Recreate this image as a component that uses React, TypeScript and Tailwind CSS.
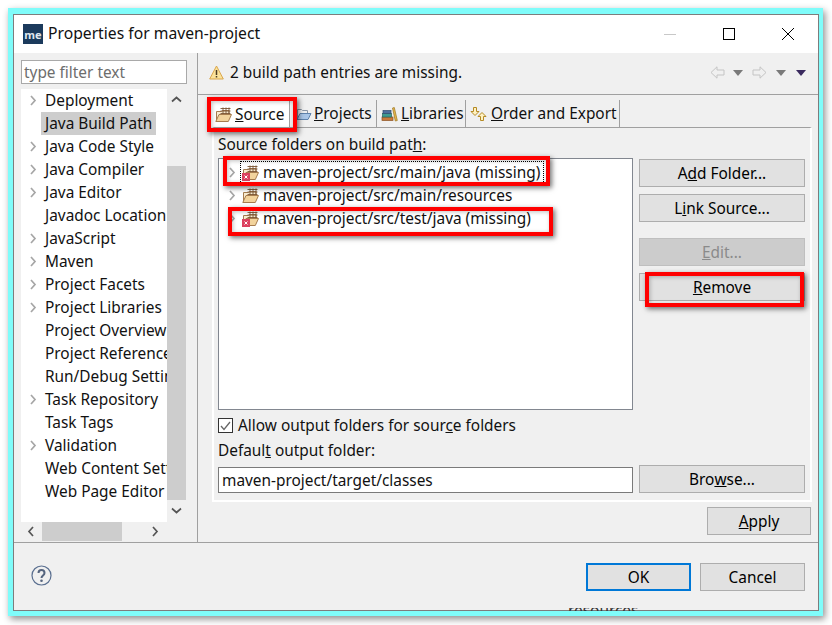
import type { ReactNode } from 'react';

const treeItems: { label: string; arrow?: boolean; selected?: boolean }[] = [
  { label: 'Deployment', arrow: true },
  { label: 'Java Build Path', selected: true },
  { label: 'Java Code Style', arrow: true },
  { label: 'Java Compiler', arrow: true },
  { label: 'Java Editor', arrow: true },
  { label: 'Javadoc Location' },
  { label: 'JavaScript', arrow: true },
  { label: 'Maven', arrow: true },
  { label: 'Project Facets', arrow: true },
  { label: 'Project Libraries', arrow: true },
  { label: 'Project Overview' },
  { label: 'Project References' },
  { label: 'Run/Debug Settings' },
  { label: 'Task Repository', arrow: true },
  { label: 'Task Tags' },
  { label: 'Validation', arrow: true },
  { label: 'Web Content Settings' },
  { label: 'Web Page Editor' },
];

function Chevron({ dir = 'right', color = '#a6a6a6' }: { dir?: 'right' | 'left' | 'up' | 'down'; color?: string }) {
  const d = { right: 'M3 1l4 4.5L3 10', left: 'M7 1L3 5.5 7 10', up: 'M1 7.5l4.5-4 4.5 4', down: 'M1 3.5l4.5 4 4.5-4' }[dir];
  return (
    <svg width="11" height="11" viewBox="0 0 11 11" fill="none" stroke={color} strokeWidth="1.7">
      <path d={d} />
    </svg>
  );
}

function SourceFolder({ error }: { error?: boolean }) {
  return (
    <svg width="17" height="16" viewBox="0 0 17 16" className="shrink-0">
      <path d="M1.500 13.500V4.500h5l1-1h6.500V8" fill="#f8ebd0" stroke="#a67c4e" />
      <path d="M.8 14.500L4 7.500h12.500l-3.200 7z" fill="#f2d39c" stroke="#a67c4e" />
      <path d="M5.500 1.500h10M5.500 4h10M5.500 6.500h10M8 .5v6.500M11 .5v6.500M14 .5v6.500" stroke="#7a5533" fill="none" strokeWidth=".9" />
      {error && (
        <g>
          <rect x="0" y="8" width="8" height="8" fill="#dc4160" />
          <path d="M2.500 10.500l3 3M5.500 10.500l-3 3" stroke="#fff" />
        </g>
      )}
    </svg>
  );
}

function ProjectFolder() {
  return (
    <svg width="16" height="16" viewBox="0 0 16 16" className="shrink-0">
      <path d="M1.500 13V3.500h4l1 1h5V8" fill="#eef0f2" stroke="#8a97a8" />
      <path d="M1 13.500L4 7.500h11l-3 6z" fill="#a9c6e8" stroke="#5f83ad" />
    </svg>
  );
}

function BooksIcon() {
  return (
    <svg width="17" height="16" viewBox="0 0 17 16" className="shrink-0">
      <rect x="1" y="11" width="11" height="3.500" fill="#c9793a" stroke="#8a5020" strokeWidth=".7" />
      <rect x="1.500" y="7.500" width="9" height="3.500" fill="#3f9a8f" stroke="#25665e" strokeWidth=".7" />
      <rect x="2" y="4.500" width="8" height="3" fill="#4e6f9e" stroke="#2f4a70" strokeWidth=".7" />
      <path d="M11.500 2l1.800-.5 3 13-2 .5z" fill="#e6b64c" stroke="#9a7420" strokeWidth=".7" />
    </svg>
  );
}

function OrderIcon() {
  return (
    <svg width="17" height="16" viewBox="0 0 17 16" fill="#fff2c2" stroke="#b58a25" className="shrink-0">
      <path d="M3.500 1.500h3v4h2.500l-4 4-4-4h2.500z" />
      <path d="M10.500 14.500h3v-4H16l-4-4-4 4h2.500z" />
    </svg>
  );
}

function Btn({ children, className = '' }: { children: ReactNode; className?: string }) {
  return (
    <div className={`flex h-[28px] items-center justify-center border border-[#adadad] bg-[#e1e1e1] pt-[2px] text-[#000] ${className}`}>
      {children}
    </div>
  );
}

function RedBox({ className }: { className: string }) {
  return <div className={`pointer-events-none absolute border-4 border-[#ff0000] shadow-[2px_2px_5px_rgba(0,0,0,0.55),inset_1px_1px_4px_rgba(0,0,0,0.25)] ${className}`} />;
}

function NavArrow({ flip }: { flip?: boolean }) {
  return (
    <svg width="15" height="13" viewBox="0 0 15 13" fill="none" stroke="#c4c4c4" className={flip ? '-scale-x-100' : ''}>
      <path d="M7 .8L1 6.500l6 5.700V9h7V4H7z" />
    </svg>
  );
}

function Tri({ color = '#7a7a7a' }: { color?: string }) {
  return (
    <svg width="10" height="6" viewBox="0 0 10 6" className="block">
      <path d="M0 0h10L5 6z" fill={color} />
    </svg>
  );
}

export default function App() {
  return (
    <div className="relative h-[625px] w-[832px] overflow-hidden bg-white pl-[8px] pt-[8px] font-['Noto_Sans','Liberation_Sans',sans-serif] text-[15.4px] leading-none text-[#111]">
      <div className="h-[608px] w-[815px] bg-[#7ffcfa] pb-[5px] pl-[5px] pr-[4px] pt-[6px] shadow-[2px_3px_7px_rgba(0,0,0,0.45)]">
        <div className="flex h-full w-full flex-col border border-[#7d7d7d] bg-[#f0f0f0]">
          {/* title bar */}
          <div className="flex h-[38px] shrink-0 items-center bg-white pl-[9px]">
            <div className="flex h-[20px] w-[20px] items-center justify-center bg-[#1b3a5c] text-[11px] font-bold text-[#dfe6ee]">me</div>
            <span className="ml-[5px] text-[15.7px]">Properties for maven-project</span>
            <div className="ml-auto flex h-full pr-[1px]">
              <div className="flex w-[59px] items-center justify-center">
                <div className="h-px w-[12px] bg-[#c8c8c8]" />
              </div>
              <div className="flex w-[59px] items-center justify-center">
                <div className="h-[12px] w-[12px] border border-black" />
              </div>
              <div className="flex w-[59px] items-center justify-center">
                <svg width="12" height="12" viewBox="0 0 12 12" stroke="#000" fill="none">
                  <path d="M0 0l12 12M12 0L0 12" />
                </svg>
              </div>
            </div>
          </div>

          {/* main */}
          <div className="flex h-[490px] shrink-0 border-b border-[#a0a0a0]">
            {/* left panel */}
            <div className="w-[184px] shrink-0 border-r border-[#a0a0a0] pl-[7px] pt-[7px]">
              <div className="flex h-[24px] w-[166px] items-center border border-[#a9a9a9] bg-white pl-[2px] pt-[1px] text-[#6d6d6d]">type filter text</div>
              <div className="mt-[5px] flex h-[433px] w-[166px]">
                <div className="w-[146px] overflow-hidden bg-white">
                  {treeItems.map(item => (
                    <div key={item.label} className="relative flex h-[23px] items-center whitespace-nowrap">
                      {item.arrow && (
                        <span className="ml-[7px] flex w-[17px]">
                          <Chevron />
                        </span>
                      )}
                      {item.selected ? (
                        <span className="ml-[20px] flex h-[23px] items-center bg-[#cdcdcd] pl-[4px] pr-[4px]">{item.label}</span>
                      ) : (
                        <span className={item.arrow ? '' : 'ml-[24px]'}>{item.label}</span>
                      )}
                    </div>
                  ))}
                </div>
                <div className="flex w-[19px] flex-col bg-[#f0f0f0]">
                  <div className="flex h-[20px] items-center justify-center">
                    <Chevron dir="up" color="#555" />
                  </div>
                  <div className="mt-[57px] h-[334px] bg-[#cdcdcd]" />
                  <div className="flex h-[20px] items-center justify-center">
                    <Chevron dir="down" color="#555" />
                  </div>
                </div>
              </div>
              <div className="flex h-[19px] w-[146px] items-center">
                <div className="flex w-[21px] justify-center">
                  <Chevron dir="left" color="#555" />
                </div>
                <div className="h-full w-[80px] bg-[#cdcdcd]" />
                <div className="flex flex-1 justify-end pr-[6px]">
                  <Chevron dir="right" color="#555" />
                </div>
              </div>
            </div>

            {/* right panel */}
            <div className="flex min-w-0 flex-1 flex-col">
              <div className="flex h-[42px] shrink-0 items-center border-b border-[#a0a0a0] pb-[2px] pl-[11px] pr-[12px]">
                <svg width="15" height="15" viewBox="0 0 15 15">
                  <path d="M7.500 1L14.300 14H.7z" fill="#fbe29a" stroke="#d9a64c" strokeLinejoin="round" />
                  <path d="M7.500 5v5M7.500 11v1.600" stroke="#4a3a20" strokeWidth="1.500" />
                </svg>
                <span className="ml-[6px]">2 build path entries are missing.</span>
                <div className="ml-auto flex items-center">
                  <NavArrow />
                  <span className="ml-[8px]"><Tri /></span>
                  <span className="ml-[9px]"><NavArrow flip /></span>
                  <span className="ml-[9px]"><Tri /></span>
                  <span className="ml-[10px]"><Tri color="#3a2a5e" /></span>
                </div>
              </div>

              {/* tabs */}
              <div className="ml-[11px] mt-[5px] flex h-[27px] shrink-0 pt-[0px]">
                <div className="flex w-[81px] items-center border-l border-r border-t border-[#a0a0a0] bg-white pl-[5px] pt-[1px]">
                  <SourceFolder />
                  <span className="ml-[3px]"><u>S</u>ource</span>
                </div>
                <div className="flex w-[87px] items-center border-r border-[#a0a0a0] pl-[6px] pt-[1px]">
                  <ProjectFolder />
                  <span className="ml-[2px]"><u>P</u>rojects</span>
                </div>
                <div className="flex w-[89px] items-center border-r border-[#a0a0a0] pl-[4px] pt-[1px]">
                  <BooksIcon />
                  <span className="ml-[3px]"><u>L</u>ibraries</span>
                </div>
                <div className="flex w-[154px] items-center border-r border-[#a0a0a0] pl-[4px] pt-[1px]">
                  <OrderIcon />
                  <span className="ml-[4px]"><u>O</u>rder and Export</span>
                </div>
              </div>

              {/* tab body */}
              <div className="ml-[14px] flex h-[375px] w-[600px] shrink-0 border-b-2 border-l-2 border-r-2 border-t border-b-white border-l-white border-r-white border-t-[#a0a0a0] pl-[4px] pr-[5px]">
                <div className="flex w-[415px] shrink-0 flex-col">
                  <div className="flex h-[30px] items-center pt-[4px]">
                    <span>Source folders on build pat<u>h</u>:</span>
                  </div>
                  <div className="h-[252px] border border-[#828790] bg-white pt-[2px]">
                    <div className="flex h-[23px] items-center">
                      <span className="ml-[8px] flex w-[13px]"><Chevron /></span>
                      <span className="flex h-[23px] items-center border border-dotted border-black pl-[1px] pr-[3px]">
                        <SourceFolder error />
                        <span className="ml-[4px]">maven-project/src/main/java (missing)</span>
                      </span>
                    </div>
                    <div className="flex h-[23px] items-center">
                      <span className="ml-[8px] flex w-[13px]"><Chevron /></span>
                      <span className="ml-[2px] flex items-center">
                        <SourceFolder />
                        <span className="ml-[4px]">maven-project/src/main/resources</span>
                      </span>
                    </div>
                    <div className="flex h-[23px] items-center">
                      <span className="ml-[8px] flex w-[13px]"><Chevron /></span>
                      <span className="ml-[2px] flex items-center">
                        <SourceFolder error />
                        <span className="ml-[4px]">maven-project/src/test/java (missing)</span>
                      </span>
                    </div>
                  </div>
                  <div className="flex h-[31px] items-center">
                    <div className="flex h-[15px] w-[15px] items-center justify-center border border-[#333] bg-white">
                      <svg width="11" height="10" viewBox="0 0 11 10" fill="none" stroke="#666" strokeWidth="1.300">
                        <path d="M1 5l3 3.500L10 1" />
                      </svg>
                    </div>
                    <span className="ml-[5px]">Allow output folders for sour<u>c</u>e folders</span>
                  </div>
                  <div className="flex h-[20px] items-center">
                    <span>Defaul<u>t</u> output folder:</span>
                  </div>
                  <div className="mt-[6px] flex h-[26px] items-center border border-[#7a7a7a] bg-white pl-[3px] pt-[2px]">maven-project/target/classes</div>
                </div>
                <div className="ml-[6px] flex w-[166px] flex-col pb-[7px] pt-[31px]">
                  <Btn>A<u>d</u>d Folder...</Btn>
                  <Btn className="mt-[7px]">L<u>i</u>nk Source...</Btn>
                  <Btn className="mt-[16px] !border-[#bfbfbf] !bg-[#cccccc] !text-[#8a8a8a]"><u>E</u>dit...</Btn>
                  <Btn className="mt-[7px]"><u>R</u>emove</Btn>
                  <Btn className="mt-auto">Bro<u>w</u>se...</Btn>
                </div>
              </div>

              <div className="mr-[7px] mt-[5px] flex justify-end">
                <Btn className="w-[104px]"><u>A</u>pply</Btn>
              </div>
            </div>
          </div>

          {/* footer */}
          <div className="flex flex-1 items-start pl-[17px] pr-[13px] pt-[20px]">
            <svg width="21" height="21" viewBox="0 0 21 21" className="mt-[2px]" fill="none">
              <circle cx="10.500" cy="10.500" r="9.500" stroke="#5a6f90" strokeWidth="1.200" />
              <path d="M7.500 8c0-4 6-4 6 0 0 2.500-3 2.500-3 5" stroke="#56657f" strokeWidth="2" />
              <circle cx="10.500" cy="15.800" r="1.300" fill="#56657f" />
            </svg>
            <Btn className="ml-auto w-[105px] !border-2 !border-[#0078d7]">OK</Btn>
            <Btn className="ml-[9px] w-[105px]">Cancel</Btn>
          </div>
        </div>
      </div>

      {/* overlays: annotation boxes and the sliver of the window behind */}
      <div className="absolute left-[568px] top-[608px] h-[2.5px] w-[80px] overflow-hidden text-[#333]">
        <span className="relative -top-[5px] block">resources</span>
      </div>
      <RedBox className="left-[207px] top-[97px] h-[35px] w-[90px]" />
      <RedBox className="left-[223px] top-[156px] h-[30px] w-[327px]" />
      <RedBox className="left-[228px] top-[207px] h-[29px] w-[325px]" />
      <RedBox className="left-[645px] top-[272px] h-[35px] w-[159px]" />
    </div>
  );
}
